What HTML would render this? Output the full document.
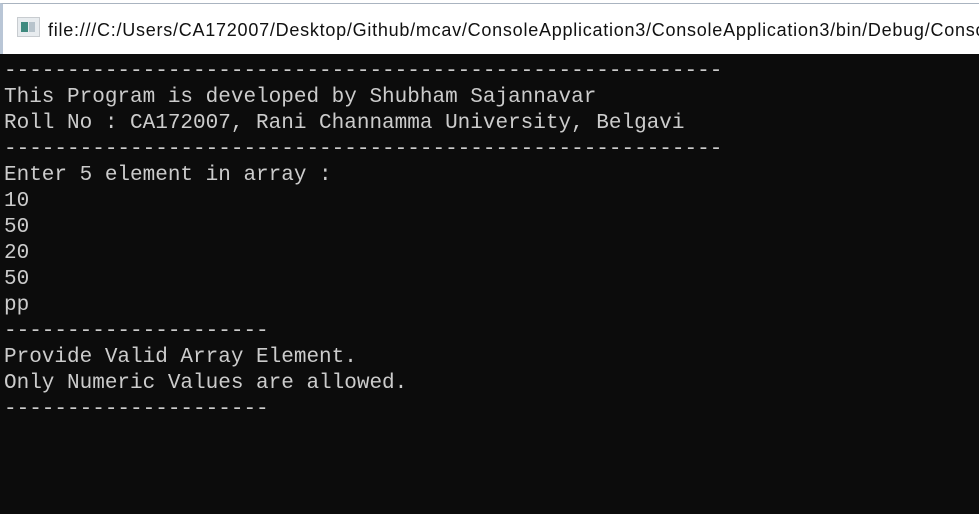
<!DOCTYPE html>
<html><head><style>
body{margin:0;width:979px;height:514px;overflow:hidden;background:#0c0c0c;position:relative;font-family:"Liberation Sans",sans-serif}
#top{position:absolute;left:0;top:0;width:979px;height:4px;background:#fff;overflow:hidden}
#title{position:absolute;left:0;top:3px;width:979px;height:51px;background:#fff;border-top:1px solid #aab4c0;border-left:3px solid #b9c6d6;box-sizing:border-box;overflow:hidden}
#icon{position:absolute;left:14px;top:13px;width:21px;height:18px;border:1px solid #c8ccd0;background:#e8ecef}
#icon:before{content:"";position:absolute;left:3px;top:4px;width:7px;height:10px;background:#3f8a7f}
#icon:after{content:"";position:absolute;left:11px;top:4px;width:6px;height:10px;background:#b8c4cc}
#ttext{position:absolute;left:45px;top:16px;font-size:18px;letter-spacing:0.75px;color:#111;white-space:nowrap}
pre{position:absolute;left:4px;top:59px;margin:0;font-family:"Liberation Mono",monospace;font-size:21px;line-height:26px;color:#cccccc}
</style></head><body>
<div id="top"></div>
<div id="title"><div id="icon"></div><div id="ttext">file:///C:/Users/CA172007/Desktop/Github/mcav/ConsoleApplication3/ConsoleApplication3/bin/Debug/ConsoleApplication3.EXE</div></div>
<pre>---------------------------------------------------------
This Program is developed by Shubham Sajannavar
Roll No : CA172007, Rani Channamma University, Belgavi
---------------------------------------------------------
Enter 5 element in array :
10
50
20
50
pp
---------------------
Provide Valid Array Element.
Only Numeric Values are allowed.
---------------------</pre>
</body></html>
